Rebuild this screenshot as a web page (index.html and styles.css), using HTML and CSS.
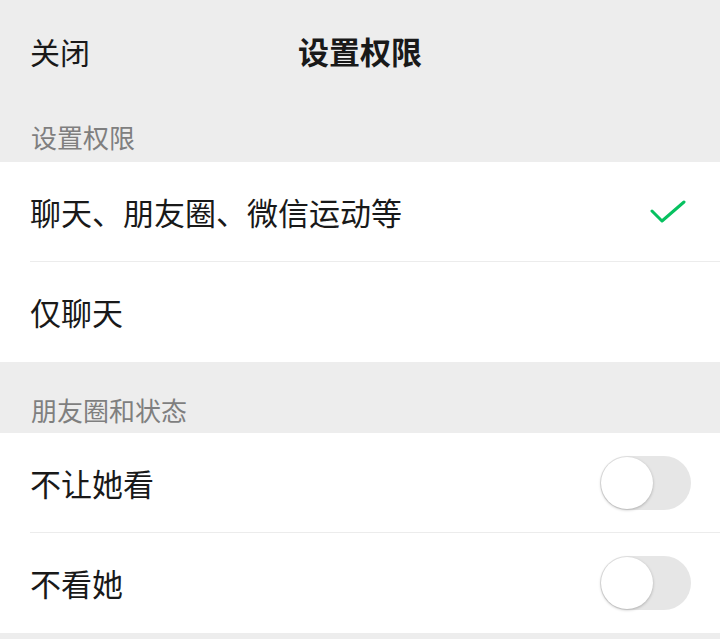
FILE: index.html
```html
<!DOCTYPE html>
<html lang="zh-CN">
<head>
  <meta charset="UTF-8">
  <meta name="viewport" content="width=device-width, initial-scale=1.0">
  <title>设置权限</title>
  <link rel="stylesheet" href="styles.css">
</head>
<body>
  <div class="page">
    <header class="nav-bar">
      <span class="nav-close">关闭</span>
      <span class="nav-title">设置权限</span>
    </header>

    <!-- 权限范围 -->
    <div class="group-title">设置权限</div>
    <div class="list">
      <div class="row">
        <span class="row-label">聊天、朋友圈、微信运动等</span>
        <svg class="check" width="36" height="26" viewBox="0 0 36 26">
          <path d="M2 12 L12 22 L34 3" fill="none" stroke="#07c160" stroke-width="3" stroke-linecap="round" stroke-linejoin="round"/>
        </svg>
      </div>
      <div class="row">
        <span class="row-label">仅聊天</span>
      </div>
    </div>

    <!-- 朋友圈和状态 -->
    <div class="group-title group-title-second">朋友圈和状态</div>
    <div class="list">
      <div class="row">
        <span class="row-label">不让她看</span>
        <span class="switch"><span class="switch-knob"></span></span>
      </div>
      <div class="row">
        <span class="row-label">不看她</span>
        <span class="switch"><span class="switch-knob"></span></span>
      </div>
    </div>
  </div>
</body>
</html>
```

FILE: styles.css
```css
body {
  margin: 0;
  background: #ededed;
  font-family: "Noto Sans CJK SC", "Noto Sans", sans-serif;
  color: #191919;
}

.page {
  width: 720px;
  height: 639px;
  overflow: hidden;
}

.nav-bar {
  position: relative;
  height: 102px;
  display: flex;
  align-items: center;
  justify-content: center;
}

.nav-close {
  position: absolute;
  left: 30px;
  top: 33px;
  font-size: 30px;
  line-height: 36px;
}

.nav-title {
  font-size: 31px;
  line-height: 36px;
  font-weight: bold;
  margin-top: 0;
}

.group-title {
  padding: 22px 31px 12px;
  font-size: 26px;
  line-height: 26px;
  color: #7f7f7f;
}

.group-title-second {
  padding-top: 35px;
  padding-bottom: 10px;
}

.list {
  background: #ffffff;
}

.row {
  height: 100px;
  margin-left: 30px;
  padding-right: 29px;
  display: flex;
  align-items: center;
  justify-content: space-between;
  border-bottom: 1px solid #ececec;
  box-sizing: border-box;
}

.row:last-child {
  border-bottom: none;
}

.row-label {
  font-size: 31px;
  line-height: 36px;
}

.check {
  margin-right: 5px;
}

.switch {
  width: 91px;
  height: 54px;
  border-radius: 27px;
  background: #e6e6e6;
  display: flex;
  align-items: center;
  box-sizing: border-box;
  padding-left: 1px;
}

.switch-knob {
  width: 52px;
  height: 52px;
  border-radius: 50%;
  background: #ffffff;
  box-shadow: 0 1px 3px rgba(0, 0, 0, 0.25);
}
```
